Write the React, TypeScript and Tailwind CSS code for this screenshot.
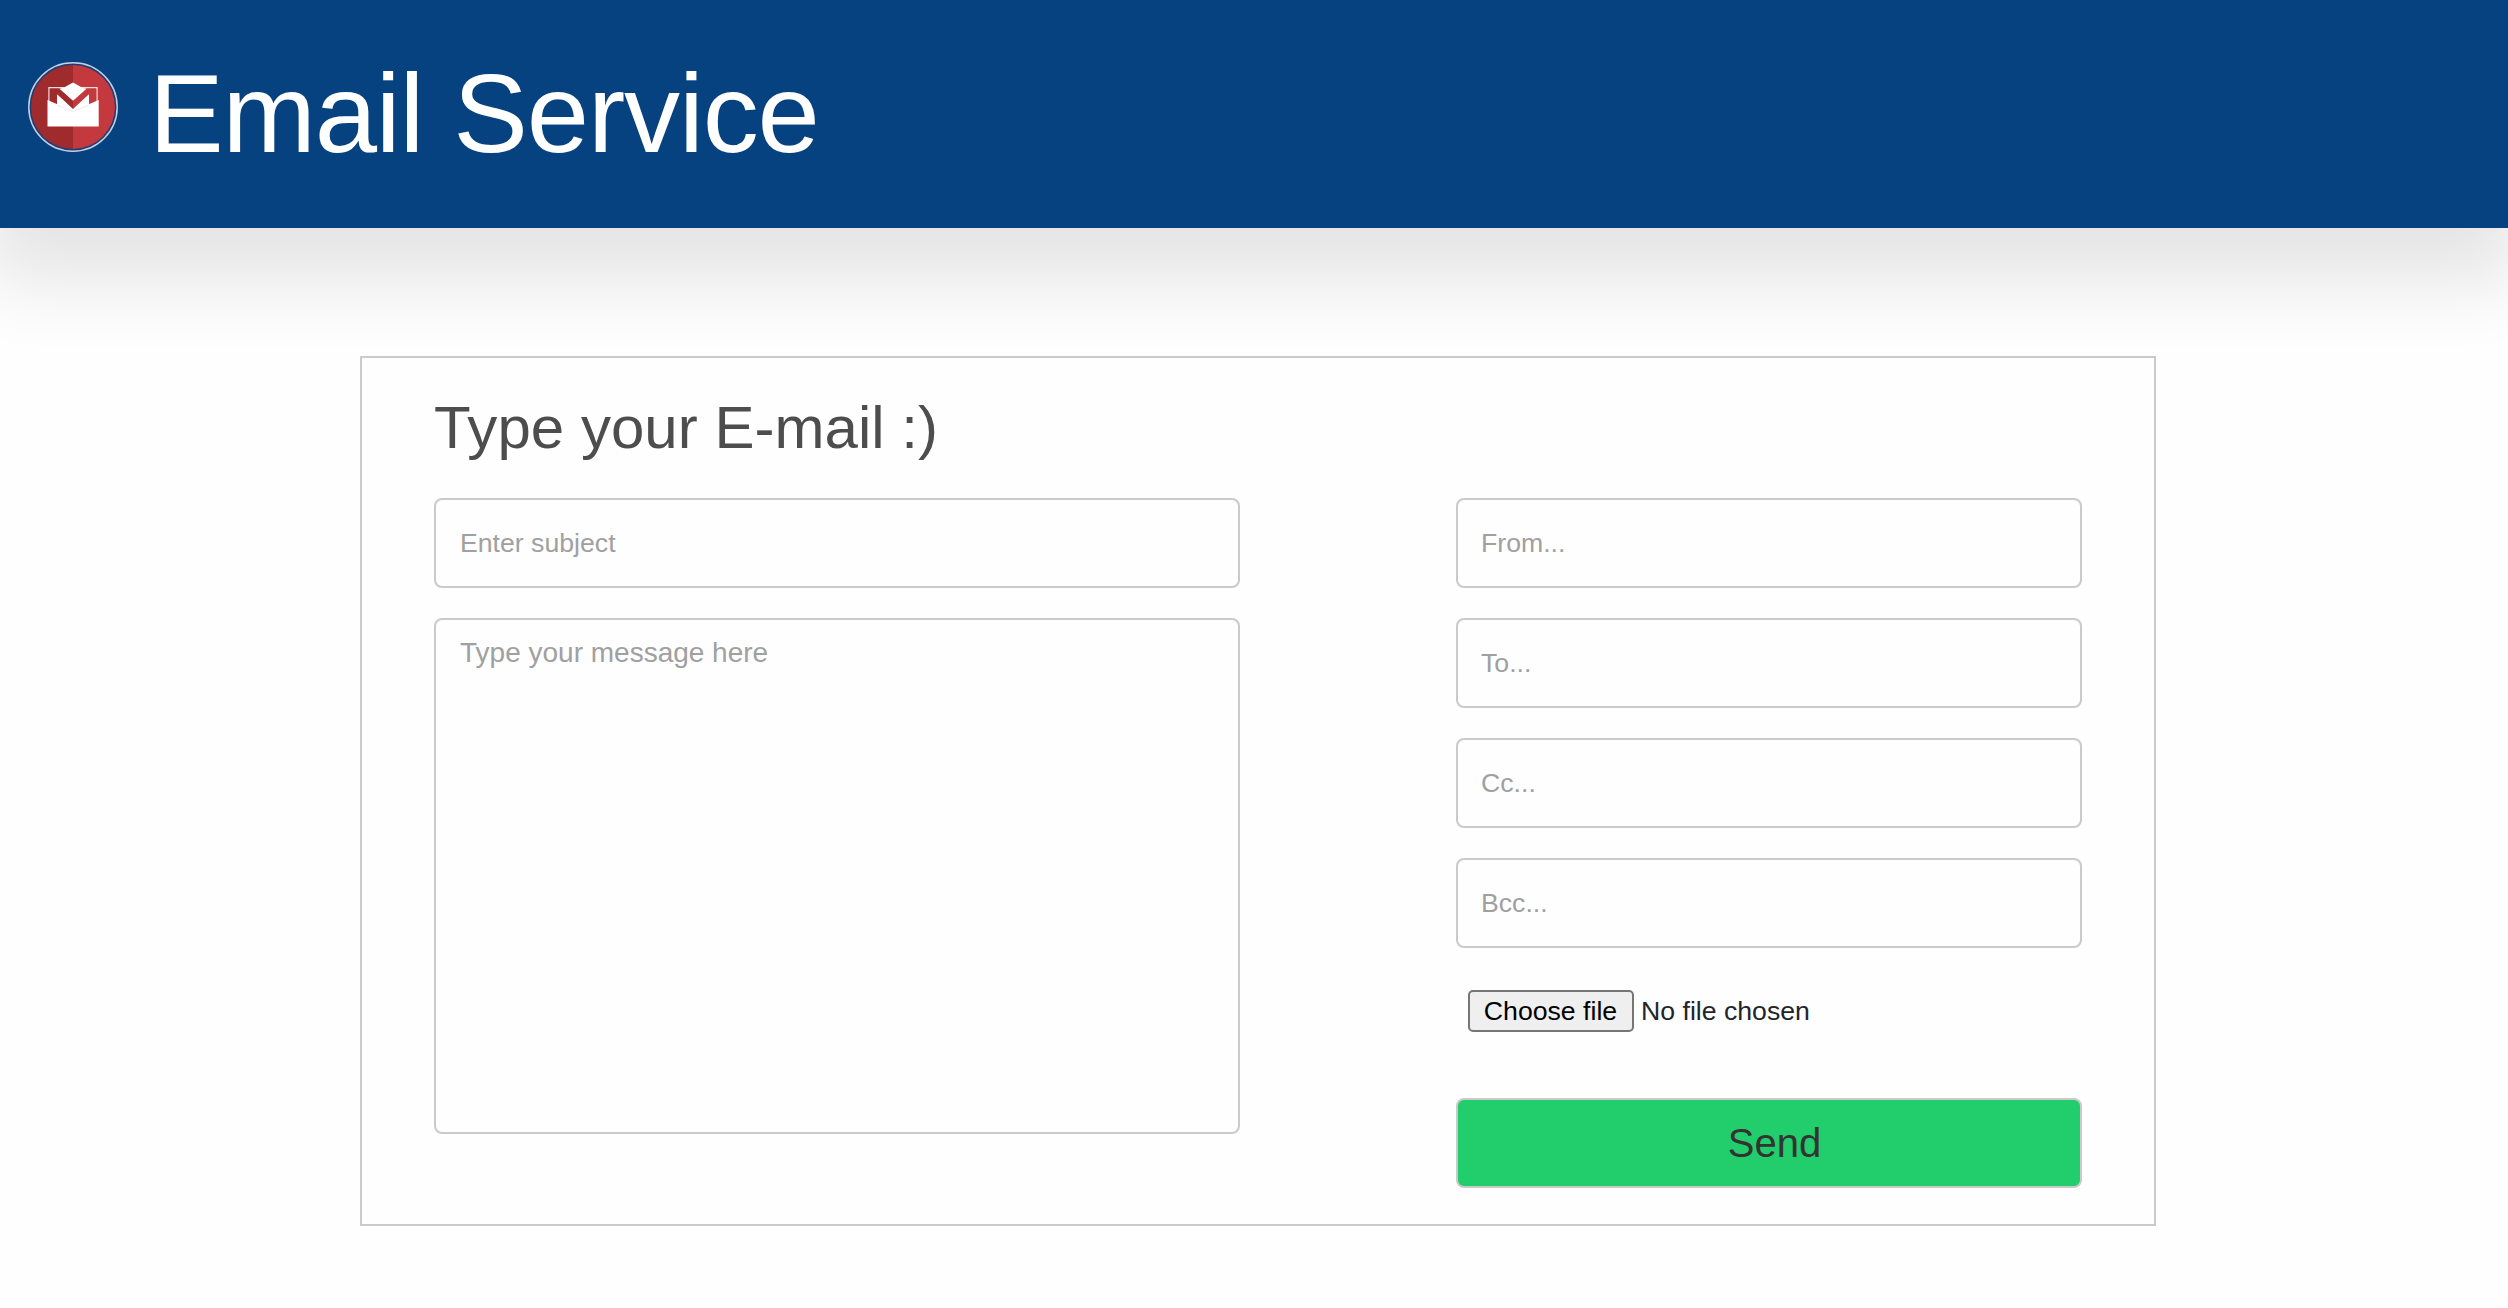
import React from "react";

const recipients = ["From...", "To...", "Cc...", "Bcc..."];

const field =
  "block w-full rounded-[8px] border-2 border-[#cacaca] bg-[#fefefe] text-[#333] placeholder:text-[#a0a0a0] placeholder:opacity-100 outline-none";

function Logo() {
  return (
    <svg viewBox="0 0 90 90" className="size-[90px] shrink-0">
      <circle cx="45" cy="45" r="44.2" fill="#1d3c78" stroke="#c3d0df" strokeWidth="1.5" />
      <path d="M45 3a42 42 0 0 0 0 84z" fill="#9f2b2d" />
      <path d="M45 3a42 42 0 0 1 0 84z" fill="#c4393d" />
      <path d="M21 41V25.800h48V41" fill="none" stroke="#f1dcdc" strokeWidth="1.4" />
      <path d="M31.500 27l4.500-1.500 9-5 9 5 4.500 1.500L45 39.500z" fill="#fff" />
      <path d="M29 32l16 14 16-14v12L45 50 29 44z" fill="#fff" />
      <path d="M21.700 26.600H31L45 38.700V47L29 32v11l-7.300-3z" fill="#9f2b2d" />
      <path d="M68.300 26.600H59L45 38.700V47L61 32v11l7.300-3z" fill="#c4393d" />
      <path d="M19.500 38L45 49l25.700-11v26.500H19.500z" fill="#fff" />
      <path d="M29 43l16 6.500L61 43" fill="none" stroke="#e9e4e4" strokeWidth=".8" />
    </svg>
  );
}

export default function App() {
  return (
    <div className="flex h-[1308px] w-full flex-col overflow-hidden bg-[#fefefe] font-['Liberation_Sans',Arial,sans-serif]">
      <header className="flex h-[228px] shrink-0 items-center gap-[31px] bg-[#06427f] pl-7 shadow-[0_40px_70px_14px_rgba(0,0,0,0.1)]">
        <div className="pb-[14px]">
          <Logo />
        </div>
        <h1 className="text-[112px] leading-[168px] tracking-[-1.15px] whitespace-nowrap text-white">Email Service</h1>
      </header>
      <main className="mt-32 ml-[360px] h-[870px] w-[1796px] shrink-0 border-2 border-[#cacaca] px-[72px] pt-[25px]">
        <h2 className="h-[115px] text-[60px] leading-[90px] tracking-[0.03px] whitespace-nowrap text-[#4d4d4d]">Type your E-mail :)</h2>
        <form className="flex justify-between" onSubmit={(e) => e.preventDefault()}>
          <div className="flex w-[806px] flex-col gap-[30px]">
            <input className={`${field} h-[90px] px-6 text-[26.67px]`} placeholder="Enter subject" />
            <textarea
              className={`${field} h-[516px] resize-none px-6 py-4 text-[28px] leading-[33px]`}
              placeholder="Type your message here"
            />
          </div>
          <div className="flex w-[626px] flex-col gap-[30px]">
            {recipients.map((label) => (
              <input key={label} className={`${field} h-[90px] px-[23px] text-[26.67px]`} placeholder={label} />
            ))}
            <div className="mt-3 flex h-[42px] items-center gap-[7px] pl-3 text-[26.67px] whitespace-nowrap">
              <button
                type="button"
                className="flex h-[42px] w-[166px] shrink-0 items-center justify-center rounded-[5px] border-2 border-[#767676] bg-[#efefef] pr-px text-black"
              >
                Choose file
              </button>
              <span className="text-[#212529]">No file chosen</span>
            </div>
            <button
              type="submit"
              className="mt-9 h-[90px] rounded-[8px] border-2 border-[#cacaca] bg-[#22cd6b] pl-[11px] text-[40px] text-[#333]"
            >
              Send
            </button>
          </div>
        </form>
      </main>
    </div>
  );
}
